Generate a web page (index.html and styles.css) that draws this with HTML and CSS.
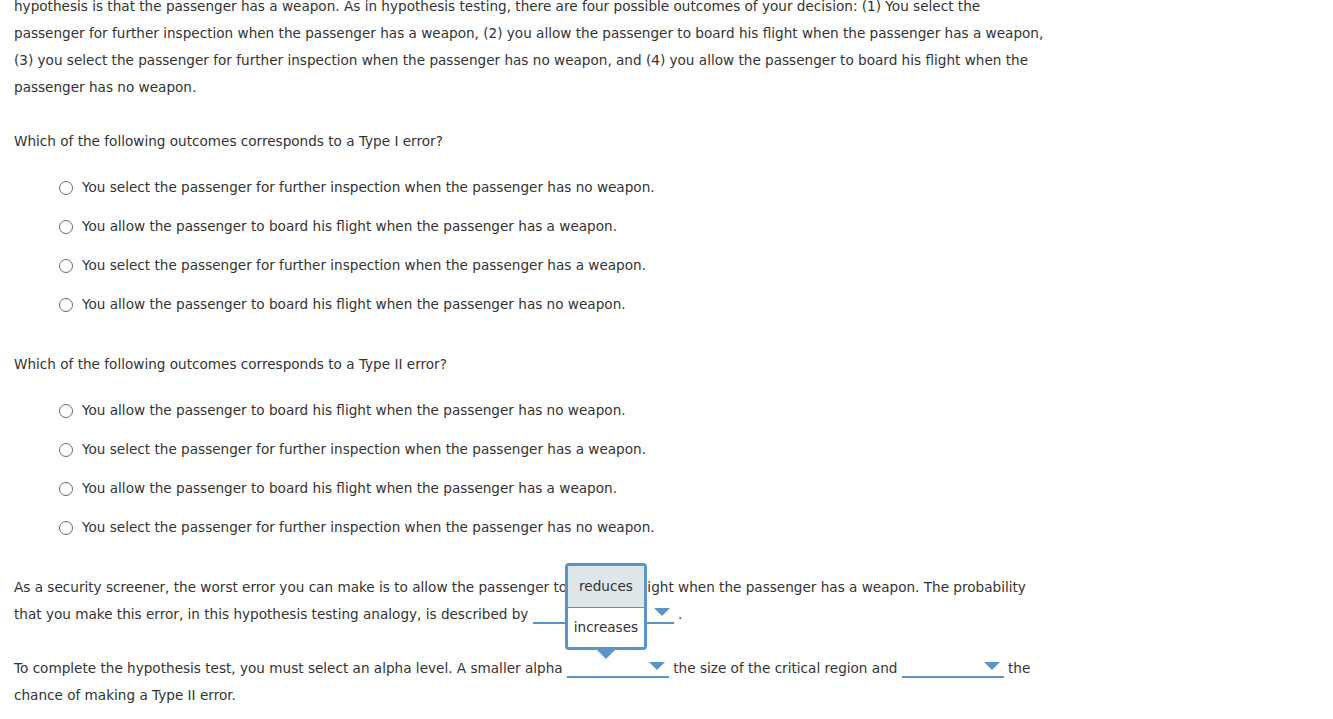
FILE: index.html
```html
<!DOCTYPE html>
<html>
<head>
<meta charset="utf-8">
<link rel="stylesheet" href="styles.css">
</head>
<body>
<div class="page">
  <p class="para">hypothesis is that the passenger has a weapon. As in hypothesis testing, there are four possible outcomes of your decision: (1) You select the passenger for further inspection when the passenger has a weapon, (2) you allow the passenger to board his flight when the passenger has a weapon, (3) you select the passenger for further inspection when the passenger has no weapon, and (4) you allow the passenger to board his flight when the passenger has no weapon.</p>

  <p class="question">Which of the following outcomes corresponds to a Type I error?</p>
  <ul class="options">
    <li class="option"><span class="radio"></span>You select the passenger for further inspection when the passenger has no weapon.</li>
    <li class="option"><span class="radio"></span>You allow the passenger to board his flight when the passenger has a weapon.</li>
    <li class="option"><span class="radio"></span>You select the passenger for further inspection when the passenger has a weapon.</li>
    <li class="option"><span class="radio"></span>You allow the passenger to board his flight when the passenger has no weapon.</li>
  </ul>

  <p class="question">Which of the following outcomes corresponds to a Type II error?</p>
  <ul class="options">
    <li class="option"><span class="radio"></span>You allow the passenger to board his flight when the passenger has no weapon.</li>
    <li class="option"><span class="radio"></span>You select the passenger for further inspection when the passenger has a weapon.</li>
    <li class="option"><span class="radio"></span>You allow the passenger to board his flight when the passenger has a weapon.</li>
    <li class="option"><span class="radio"></span>You select the passenger for further inspection when the passenger has no weapon.</li>
  </ul>

  <p class="para">As a security screener, the worst error you can make is to allow the passenger to board his flight when the passenger has a weapon. The probability that you make this error, in this hypothesis testing analogy, is described by <span class="select wide"><span class="caret"></span></span> .</p>

  <p class="para">To complete the hypothesis test, you must select an alpha level. A smaller alpha <span class="select open"><span class="caret"></span><span class="menu"><span class="menu-item active">reduces</span><span class="menu-item">increases</span><span class="menu-arrow"></span></span></span> the size of the critical region and <span class="select"><span class="caret"></span></span> the chance of making a Type II error.</p>
</div>
</body>
</html>
```
FILE: styles.css
```css
html, body {
  margin: 0;
  padding: 0;
  background: #ffffff;
}
body {
  font-family: "DejaVu Sans", Verdana, sans-serif;
  font-size: 13.6px;
  color: #333333;
  overflow: hidden;
}
.page {
  width: 1040px;
  padding-left: 14px;
  margin-top: -7px;
}
p {
  margin: 0;
  line-height: 27px;
}
.para {
  margin-bottom: 27px;
}
.question {
  margin-bottom: 13px;
}
.options {
  list-style: none;
  margin: 0 0 27px 0;
  padding: 0;
}
.option {
  height: 39px;
  line-height: 39px;
  padding-left: 45px;
  display: flex;
  align-items: center;
}
.radio {
  width: 14px;
  height: 14px;
  border: 1px solid #6b6b6b;
  border-radius: 50%;
  margin-right: 9px;
  flex: none;
  box-sizing: border-box;
}
.select {
  display: inline-block;
  position: relative;
  width: 102px;
  height: 18px;
  border-bottom: 2px solid #5b95c8;
  vertical-align: -5px;
}
.select.wide {
  width: 141px;
}
.caret {
  position: absolute;
  right: 4px;
  top: 4px;
  width: 0;
  height: 0;
  border-left: 8px solid transparent;
  border-right: 8px solid transparent;
  border-top: 8px solid #5b95c8;
}
.menu {
  position: absolute;
  left: -2px;
  bottom: 26px;
  width: 82px;
  box-sizing: border-box;
  border: 3px solid #5b95c8;
  border-radius: 4px;
  background: #ffffff;
  display: flex;
  flex-direction: column;
}
.menu-item {
  display: block;
  text-align: center;
  line-height: 40px;
  height: 40px;
}
.menu-item.active {
  background: #dde6e9;
  border-bottom: 1px solid #5b95c8;
  height: 41px;
}
.menu-item + .menu-item {
  height: 39px;
  line-height: 38px;
}
.menu-arrow {
  position: absolute;
  left: 50%;
  bottom: -12px;
  margin-left: -9px;
  width: 0;
  height: 0;
  border-left: 9px solid transparent;
  border-right: 9px solid transparent;
  border-top: 9px solid #5b95c8;
}
```
